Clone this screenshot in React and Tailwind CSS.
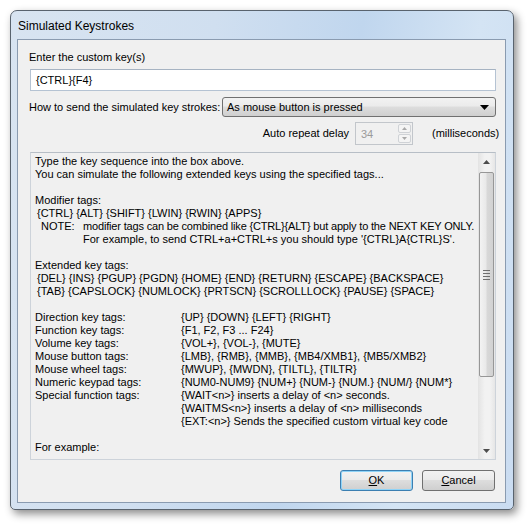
import React from 'react';

const FONT = { fontFamily: '"Liberation Sans", Arial, sans-serif' };

const TAG_ROWS = [
  ['Direction key tags:', '{UP} {DOWN} {LEFT} {RIGHT}'],
  ['Function key tags:', '{F1, F2, F3 ... F24}'],
  ['Volume key tags:', '{VOL+}, {VOL-}, {MUTE}'],
  ['Mouse button tags:', '{LMB}, {RMB}, {MMB}, {MB4/XMB1}, {MB5/XMB2}'],
  ['Mouse wheel tags:', '{MWUP}, {MWDN}, {TILTL}, {TILTR}'],
  ['Numeric keypad tags:', '{NUM0-NUM9} {NUM+} {NUM-} {NUM.} {NUM/} {NUM*}'],
  ['Special function tags:', '{WAIT<n>} inserts a delay of <n> seconds.'],
  ['', '{WAITMS<n>} inserts a delay of <n> milliseconds'],
  ['', '{EXT:<n>} Sends the specified custom virtual key code'],
];

const btnCls = 'h-[21px] w-[73px] rounded-[3px] text-[11px] text-black flex items-center justify-center bg-[linear-gradient(#f2f2f2_0%,#ebebeb_45%,#dddddd_50%,#cfcfcf_100%)]';

function Arrow({ up }) {
  return (
    <svg width="7" height="4" viewBox="0 0 7 4">
      <path d={up ? 'M0 4 L3.5 0 L7 4 Z' : 'M0 0 L7 0 L3.5 4 Z'} fill="#4d4d4d" />
    </svg>
  );
}

function Scrollbar() {
  return (
    <div className="w-[17px] h-full flex flex-col bg-[linear-gradient(90deg,#e3e3e3,#f2f2f2_40%,#f2f2f2_70%,#e6e6e6)]">
      <div className="h-[17px] flex items-center justify-center"><Arrow up /></div>
      <div className="flex-1 pt-[2px]">
        <div className="mx-px h-[205px] rounded-[2px] border border-[#979797] bg-[linear-gradient(90deg,#f3f3f3,#e9e9e9_45%,#d8d8d8_55%,#d2d2d2)] flex flex-col items-center justify-center gap-[2px]">
          <div className="w-[7px] h-px bg-[#6f6f6f]" />
          <div className="w-[7px] h-px bg-[#6f6f6f]" />
          <div className="w-[7px] h-px bg-[#6f6f6f]" />
          <div className="w-[7px] h-px bg-[#6f6f6f]" />
        </div>
      </div>
      <div className="h-[17px] flex items-center justify-center"><Arrow /></div>
    </div>
  );
}

export default function App() {
  return (
    <div className="w-[532px] h-[529px] bg-white pt-[10px] pl-[10px]" style={FONT}>
      <div className="w-[504px] h-[500px] flex flex-col rounded-t-[7px] rounded-b-[5px] border border-[#59636e] bg-[linear-gradient(100deg,#d8e4f1_0%,#d0dff0_35%,#c0d6ee_60%,#d4e4f4_80%,#cadcf1_100%)] shadow-[3px_4px_9px_rgba(0,0,0,0.45)]">
        <div className="h-[28px] shrink-0 flex items-center pl-[7px] pt-px text-[12px] text-black">Simulated Keystrokes</div>

        <div className="ml-[6px] mr-[7px] mb-[6px] flex-1 border border-[#8a9bb0] bg-[#f0f0f0] pl-[11px] flex flex-col text-[11px] text-black">
          <div className="mt-[11px] leading-[13px]">Enter the custom key(s)</div>

          <div className="mt-[5px] ml-px w-[466px] h-[22px] bg-white border border-[#b5c3d3] border-t-[#a6b3c2] flex items-center pl-[5px]">
            {'{CTRL}{F4}'}
          </div>

          <div className="mt-[6px] ml-px w-[466px] h-[20px] flex items-center">
            <div className="w-[193px] -ml-px shrink-0">How to send the simulated key strokes:</div>
            <div className="flex-1 h-full rounded-[3px] border border-[#707070] bg-[linear-gradient(#f2f2f2_0%,#ebebeb_45%,#dddddd_50%,#cfcfcf_100%)] flex items-center pl-[4px] pr-[6px]">
              <span className="flex-1">As mouse button is pressed</span>
              <svg width="9" height="5" viewBox="0 0 9 5"><path d="M0 0 L9 0 L4.5 5 Z" fill="#000" /></svg>
            </div>
          </div>

          <div className="mt-[5px] h-[23px] flex items-center">
            <div className="w-[320px] text-right">Auto repeat delay</div>
            <div className="ml-[6px] w-[58px] h-full border border-[#c2c6cb] bg-[#f0f0f0] flex">
              <span className="flex-1 pl-[5px] pt-[3px] text-[#9a9a9a]">34</span>
              <div className="w-[15px] flex flex-col gap-px p-px">
                <div className="flex-1 border border-[#cfd2d6] rounded-[2px] bg-[#f4f4f4] flex items-center justify-center"><svg width="5" height="3" viewBox="0 0 5 3"><path d="M0 3 L2.5 0 L5 3 Z" fill="#a8a8a8" /></svg></div>
                <div className="flex-1 border border-[#cfd2d6] rounded-[2px] bg-[#f4f4f4] flex items-center justify-center"><svg width="5" height="3" viewBox="0 0 5 3"><path d="M0 0 L5 0 L2.5 3 Z" fill="#a8a8a8" /></svg></div>
              </div>
            </div>
            <div className="ml-[19px]">(milliseconds)</div>
          </div>

          <div className="mt-[7px] ml-px w-[466px] h-[308px] border border-[#cdd3da] border-t-[#b7bec6] flex overflow-hidden">
            <div className="flex-1 min-w-0 pt-[2px] pl-[4px] leading-[13px] whitespace-nowrap overflow-hidden">
              <div>Type the key sequence into the box above.</div>
              <div>You can simulate the following extended keys using the specified tags...</div>
              <div className="h-[13px]" />
              <div>Modifier tags:</div>
              <div className="pl-[2px]">{'{CTRL} {ALT} {SHIFT} {LWIN} {RWIN} {APPS}'}</div>
              <div className="flex">
                <span className="w-[48px] shrink-0 pl-[6px]">NOTE:</span>
                <span className="tracking-[-0.17px]">{'modifier tags can be combined like {CTRL}{ALT} but apply to the NEXT KEY ONLY.'}</span>
              </div>
              <div className="pl-[48px]">{"For example, to send CTRL+a+CTRL+s you should type '{CTRL}A{CTRL}S'."}</div>
              <div className="h-[13px]" />
              <div>Extended key tags:</div>
              <div className="pl-[2px]">{'{DEL} {INS} {PGUP} {PGDN} {HOME} {END} {RETURN} {ESCAPE} {BACKSPACE}'}</div>
              <div className="pl-[2px]">{'{TAB} {CAPSLOCK} {NUMLOCK} {PRTSCN} {SCROLLLOCK} {PAUSE} {SPACE}'}</div>
              <div className="h-[13px]" />
              {TAG_ROWS.map(([label, value], i) => (
                <div key={i} className="flex">
                  <span className="w-[146px] shrink-0">{label}</span>
                  <span>{value}</span>
                </div>
              ))}
              <div className="h-[13px]" />
              <div>For example:</div>
            </div>
            <Scrollbar />
          </div>

          <div className="mt-[10px] flex justify-end gap-[9px] pr-[10px]">
            <button className={btnCls + ' border border-[#3c7fb1] shadow-[inset_0_0_0_1px_#8fd3f7]'}><span><u>O</u>K</span></button>
            <button className={btnCls + ' border border-[#707070]'}><span><u>C</u>ancel</span></button>
          </div>
        </div>
      </div>
    </div>
  );
}
